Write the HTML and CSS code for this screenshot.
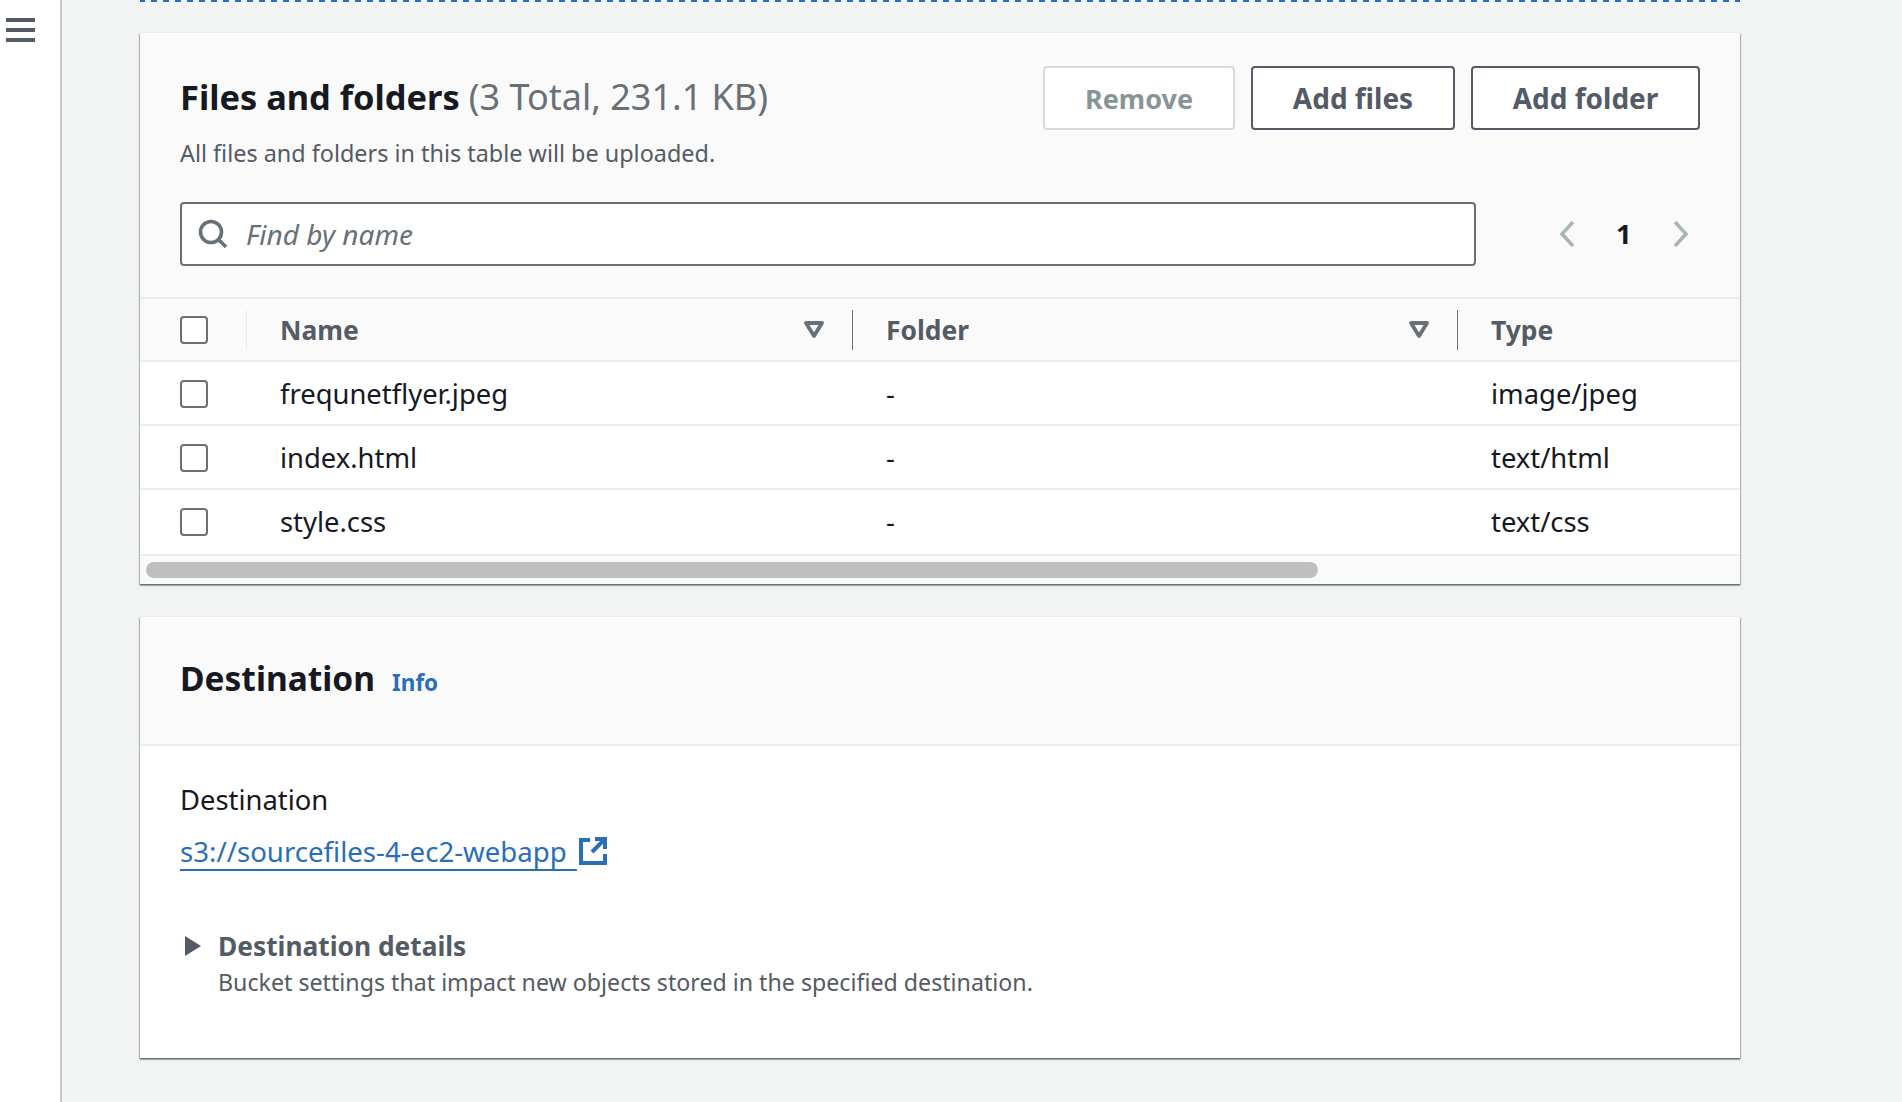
FILE: index.html
```html
<!DOCTYPE html>
<html lang="en">
<head>
    <meta charset="UTF-8">
    <meta name="viewport" content="width=device-width, initial-scale=1.0">
    <title>Upload - S3</title>
    <link rel="stylesheet" href="styles.css">
</head>
<body>
    <nav class="side-rail">
        <button class="menu-btn" type="button" aria-label="Open navigation">
            <span></span><span></span><span></span>
        </button>
    </nav>
    <main class="content">
        <div class="drop-edge"></div>

        <section class="card files-card">
            <header class="files-head">
                <div class="title-row">
                    <div>
                        <h2 class="card-title">Files and folders <span class="count">(3 Total, 231.1 KB)</span></h2>
                        <p class="card-desc">All files and folders in this table will be uploaded.</p>
                    </div>
                    <div class="actions">
                        <button class="btn btn-remove" type="button" disabled>Remove</button>
                        <button class="btn btn-files" type="button">Add files</button>
                        <button class="btn btn-folder" type="button">Add folder</button>
                    </div>
                </div>
                <div class="tools-row">
                    <div class="search-box">
                        <svg class="search-icon" viewBox="0 0 30 30" width="30" height="30" aria-hidden="true">
                            <circle cx="13" cy="13" r="10.5" fill="none" stroke="#687078" stroke-width="3.6"/>
                            <path d="M20.5 20.5 L28 28" fill="none" stroke="#687078" stroke-width="3.6"/>
                        </svg>
                        <span class="search-text">Find by name</span>
                    </div>
                    <div class="pager">
                        <svg viewBox="0 0 16 26" width="16" height="26" aria-hidden="true"><path d="M14 1 L3 13 L14 25" fill="none" stroke="#aab7b8" stroke-width="3.6"/></svg>
                        <span class="page-num">1</span>
                        <svg viewBox="0 0 16 26" width="16" height="26" aria-hidden="true"><path d="M2 1 L13 13 L2 25" fill="none" stroke="#aab7b8" stroke-width="3.6"/></svg>
                    </div>
                </div>
            </header>

            <table class="file-table">
                <colgroup>
                    <col class="col-check"><col class="col-name"><col class="col-folder"><col>
                </colgroup>
                <thead>
                    <tr>
                        <th><div class="th-box th-check"><span class="checkbox"></span></div></th>
                        <th>
                            <div class="th-box">
                                <span>Name</span>
                                <svg class="filter-icon" viewBox="0 0 20 17" width="20" height="17" aria-hidden="true"><path d="M2 2 H18 L10 15 Z" fill="none" stroke="#687078" stroke-width="3.8" stroke-linejoin="round"/></svg>
                            </div>
                        </th>
                        <th>
                            <div class="th-box">
                                <span>Folder</span>
                                <svg class="filter-icon" viewBox="0 0 20 17" width="20" height="17" aria-hidden="true"><path d="M2 2 H18 L10 15 Z" fill="none" stroke="#687078" stroke-width="3.8" stroke-linejoin="round"/></svg>
                            </div>
                        </th>
                        <th><div class="th-box th-last"><span>Type</span></div></th>
                    </tr>
                </thead>
                <tbody>
                    <tr>
                        <td class="cell-check"><span class="checkbox"></span></td>
                        <td>frequnetflyer.jpeg</td>
                        <td>-</td>
                        <td>image/jpeg</td>
                    </tr>
                    <tr>
                        <td class="cell-check"><span class="checkbox"></span></td>
                        <td>index.html</td>
                        <td>-</td>
                        <td>text/html</td>
                    </tr>
                    <tr class="row-last">
                        <td class="cell-check"><span class="checkbox"></span></td>
                        <td>style.css</td>
                        <td>-</td>
                        <td>text/css</td>
                    </tr>
                </tbody>
            </table>
            <div class="scroll-track"><div class="scroll-thumb"></div></div>
        </section>

        <section class="card dest-card">
            <header class="dest-head">
                <h2 class="card-title dest-title">Destination</h2>
                <a class="info-link" href="#">Info</a>
            </header>
            <div class="dest-body">
                <div class="field-label">Destination</div>
                <div class="field-value">
                    <a class="bucket-link" href="#">s3://sourcefiles-4-ec2-webapp </a>
                    <svg class="ext-icon" viewBox="0 0 28 28" width="28" height="28" aria-hidden="true">
                        <path d="M11 3 H2 V26 H26 V17" fill="none" stroke="#2a6fb5" stroke-width="4"/>
                        <path d="M16 2 H26 V12 M26 2 L13 15" fill="none" stroke="#2a6fb5" stroke-width="4"/>
                    </svg>
                </div>
                <div class="details">
                    <svg class="caret" viewBox="0 0 17 20" width="17" height="20" aria-hidden="true"><path d="M1 0 L17 10 L1 20 Z" fill="#545b64"/></svg>
                    <div>
                        <div class="details-title">Destination details</div>
                        <div class="details-desc">Bucket settings that impact new objects stored in the specified destination.</div>
                    </div>
                </div>
            </div>
        </section>
    </main>
</body>
</html>
```

FILE: styles.css
```css
* {
    box-sizing: border-box;
}

html, body {
    height: 100%;
}

body {
    margin: 0;
    display: flex;
    overflow: hidden;
    background-color: #f2f3f3;
    color: #16191f;
    font-family: 'Noto Sans', sans-serif;
    font-size: 27.4px;
}

/* left rail */
.side-rail {
    width: 62px;
    flex-shrink: 0;
    background-color: #fff;
    border-right: 2px solid #c4c8c8;
}

.menu-btn {
    display: flex;
    flex-direction: column;
    gap: 6px;
    width: 29px;
    margin: 18px 0 0 6px;
    padding: 0;
    border: none;
    background: none;
}

.menu-btn span {
    display: block;
    height: 4px;
    background-color: #545b64;
}

.content {
    width: 1600px;
    margin-left: 78px;
}

.drop-edge {
    height: 2px;
    margin-bottom: 31px;
    background-image: linear-gradient(90deg, #2a6fb5 50%, transparent 50%);
    background-size: 12px 2px;
    background-position: -1px 0;
}

.card {
    background-color: #fff;
    box-shadow: 0 -1px 0 0 #eaeded, 0 2px 1px 0 rgba(0, 28, 36, 0.27), 1px 1px 1px 0 rgba(0, 28, 36, 0.25), -1px 1px 1px 0 rgba(0, 28, 36, 0.25);
}

/* files card */
.files-card {
    margin-bottom: 33px;
}

.files-head {
    height: 266px;
    padding: 33px 40px 0;
    background-color: #fafafa;
    border-bottom: 2px solid #eaeded;
}

.title-row {
    display: flex;
    justify-content: space-between;
    height: 136px;
}

.card-title {
    margin: 0;
    font-size: 34.4px;
    line-height: 62px;
    font-weight: 700;
}

.count {
    font-size: 36px;
    font-weight: 400;
    color: #687078;
}

.card-desc {
    margin: 1px 0 0;
    font-size: 23.4px;
    line-height: 48px;
    color: #545b64;
}

.actions {
    display: flex;
    gap: 16px;
}

.btn {
    height: 64px;
    padding: 0;
    font-family: inherit;
    font-size: 28px;
    font-weight: 700;
    background-color: #fff;
    color: #545b64;
    border: 2px solid #545b64;
    border-radius: 4px;
}

.btn-remove {
    width: 192px;
    font-size: 27px;
    color: #879596;
    border-color: #d5dbdb;
}

.btn-files {
    width: 204px;
}

.btn-folder {
    width: 229px;
}

.tools-row {
    display: flex;
    align-items: center;
    height: 64px;
}

.search-box {
    display: flex;
    align-items: center;
    gap: 18px;
    width: 1296px;
    height: 64px;
    padding-left: 16px;
    background-color: #fff;
    border: 2px solid #687078;
    border-radius: 4px;
}

.search-text {
    font-style: italic;
    font-size: 28px;
    color: #687078;
}

.pager {
    display: flex;
    align-items: center;
    gap: 41px;
    margin-left: 83px;
}

.page-num {
    position: relative;
    top: -1px;
    font-weight: 700;
}

/* table */
.file-table {
    width: 100%;
    border-collapse: collapse;
    table-layout: fixed;
}

.col-check {
    width: 107px;
}

.col-name {
    width: 606px;
}

.col-folder {
    width: 605px;
}

.file-table th {
    height: 62px;
    padding: 0;
    background-color: #fafafa;
    border-bottom: 2px solid #eaeded;
    text-align: left;
    font-size: 26.4px;
    font-weight: 700;
    color: #545b64;
}

.th-box {
    display: flex;
    align-items: center;
    justify-content: space-between;
    height: 40px;
    margin-right: -1px;
    padding: 0 28px 0 33px;
    border-right: 2px solid #687078;
}

.th-check {
    padding-left: 40px;
    border-right-color: #eaeded;
}

.th-last {
    border-right: none;
}

.file-table td {
    height: 64px;
    padding: 0 33px;
    border-bottom: 2px solid #eaeded;
}

.file-table td.cell-check {
    padding-left: 40px;
}

.file-table .row-last td {
    height: 66px;
    padding-bottom: 2px;
}

.checkbox {
    display: block;
    width: 28px;
    height: 28px;
    background-color: #fff;
    border: 2px solid #687078;
    border-radius: 4px;
}

.cell-check .checkbox {
    margin-top: 1px;
}

.scroll-track {
    height: 28px;
    padding: 6px 0 0 6px;
    background-color: #fafafa;
}

.scroll-thumb {
    width: 1172px;
    height: 16px;
    background-color: #bfbfbf;
    border-radius: 8px;
}

/* destination card */
.dest-head {
    display: flex;
    align-items: baseline;
    gap: 17px;
    height: 129px;
    padding: 29px 40px 0;
    background-color: #fafafa;
    border-bottom: 2px solid #eaeded;
}

.dest-title {
    font-size: 33.5px;
    line-height: 64px;
}

.info-link {
    font-size: 22.5px;
    font-weight: 700;
    color: #2a6fb5;
    text-decoration: none;
}

.dest-body {
    height: 312px;
    padding: 34px 40px 0;
}

.field-label {
    line-height: 40px;
}

.field-value {
    display: flex;
    align-items: center;
    gap: 2px;
    margin-top: 11px;
    line-height: 40px;
}

.bucket-link {
    color: #2a6fb5;
    white-space: pre;
    font-size: 27.6px;
    word-spacing: 3px;
    text-decoration: underline 2px;
    text-underline-offset: 7px;
}

.details {
    display: flex;
    margin-top: 59px;
}

.caret {
    flex-shrink: 0;
    margin: 6px 17px 0 4px;
}

.details-title {
    font-size: 26.3px;
    font-weight: 700;
    line-height: 32px;
    color: #545b64;
}

.details-desc {
    margin-top: 4px;
    font-size: 23.2px;
    line-height: 32px;
    color: #545b64;
}
```
